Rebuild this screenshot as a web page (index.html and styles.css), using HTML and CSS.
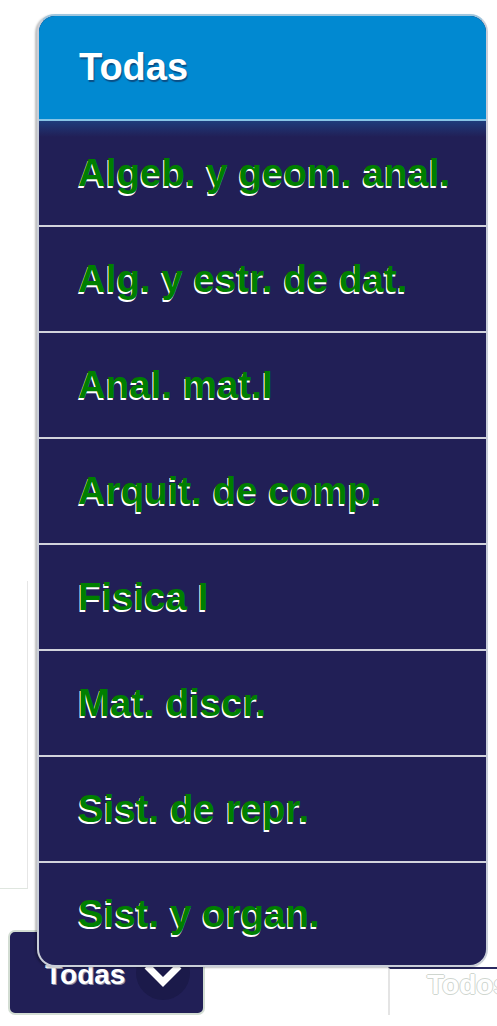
FILE: index.html
```html
<!DOCTYPE html>
<html lang="es">
<head>
<meta charset="utf-8">
<title>Asignaturas</title>
<link rel="stylesheet" href="styles.css">
</head>
<body>
<div class="page">
  <div class="ghost-panel"></div>
  <div class="filter-bar">
    <button class="select-btn">
      <span class="select-label">Todas</span>
      <span class="chevron">
        <svg width="38" height="24" viewBox="0 0 38 24"><path d="M3 3 L19 19 L35 3" fill="none" stroke="#ffffff" stroke-width="7" stroke-linejoin="miter"/></svg>
      </span>
    </button>
    <div class="select-ghost">
      <span class="ghost-label">Todos</span>
    </div>
  </div>

  <ul class="menu">
    <li class="menu-head">Todas</li>
    <li class="menu-item first">Algeb. y geom. anal.</li>
    <li class="menu-item">Alg. y estr. de dat.</li>
    <li class="menu-item">Anal. mat.I</li>
    <li class="menu-item">Arquit. de comp.</li>
    <li class="menu-item">Fisica I</li>
    <li class="menu-item">Mat. discr.</li>
    <li class="menu-item">Sist. de repr.</li>
    <li class="menu-item last">Sist. y organ.</li>
  </ul>
</div>
</body>
</html>
```

FILE: styles.css
```css
* { box-sizing: border-box; }
html, body {
  margin: 0;
  padding: 0;
  background: #ffffff;
  font-family: "Liberation Sans", Arial, sans-serif;
}
.page {
  position: relative;
  width: 497px;
  height: 1026px;
  overflow: hidden;
  display: flex;
  flex-direction: column;
  justify-content: flex-end;
}
.ghost-panel {
  position: absolute;
  left: -10px;
  top: 581px;
  width: 38px;
  height: 308px;
  border-right: 1px solid #e6e6e6;
  border-bottom: 1px solid #dfe6df;
}
.filter-bar {
  display: flex;
  align-items: flex-end;
  padding: 0 0 11px 8px;
}
.select-btn {
  flex-shrink: 0;
  width: 197px;
  height: 85px;
  background: #211f56;
  border: 2px solid #d3ddd3;
  border-radius: 7px;
  display: flex;
  align-items: center;
  padding: 0 0 0 35px;
  margin: 0;
  font-family: inherit;
  cursor: pointer;
}
.select-label {
  color: #ffffff;
  font-size: 28px;
  font-weight: bold;
  text-shadow: 1px 1px 0 #8f90a8;
  padding-top: 4px;
}
.chevron {
  margin-left: 11px;
  width: 54px;
  height: 54px;
  border-radius: 50%;
  background: #1b1a4a;
  display: flex;
  align-items: center;
  justify-content: center;
  padding-top: 4px;
}
.select-ghost {
  flex-shrink: 0;
  margin-left: 183px;
  width: 120px;
  height: 48px;
  border-left: 2px solid #e4e4e4;
  border-top: 2px solid #2a2960;
  padding-left: 37px;
  display: flex;
  align-items: flex-start;
}
.ghost-label {
  font-size: 28px;
  font-weight: bold;
  color: #ffffff;
  text-shadow: 1px 0 0 #cfd6cf, -1px 0 0 #cfd6cf, 0 1px 0 #cfd6cf, 0 -1px 0 #cfd6cf;
  line-height: 32px;
  white-space: nowrap;
}
.menu {
  position: absolute;
  top: 14px;
  left: 37px;
  width: 451px;
  margin: 0;
  padding: 0;
  list-style: none;
  border: 2px solid #c9ced8;
  border-top-color: #9fc6de;
  border-radius: 18px;
  overflow: hidden;
  background: #211f56;
  box-shadow: -2px 1px 2px rgba(0, 0, 0, 0.25);
}
.menu-head {
  height: 105px;
  background: #0189d1;
  border-bottom: 2px solid #86c4e6;
  display: flex;
  align-items: center;
  padding-left: 40px;
  color: #ffffff;
  font-size: 38px;
  font-weight: bold;
  text-shadow: 1px 2px 1px #0a4f86;
}
.menu-item {
  height: 106px;
  border-bottom: 2px solid #d2d3dc;
  display: flex;
  align-items: center;
  padding-left: 39px;
  color: #007f00;
  font-size: 38.5px;
  font-weight: bold;
  text-shadow: -1px 2px 0 #ffffff;
  white-space: nowrap;
}
.menu-item.first {
  background: linear-gradient(#1e3c7c 0px, #211f56 16px);
}
.menu-item.last {
  height: 102px;
  border-bottom: none;
}
```
